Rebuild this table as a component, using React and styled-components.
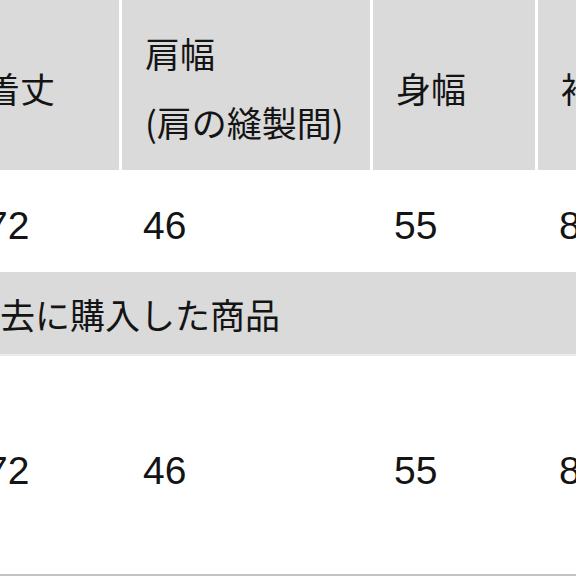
import React from "react";
import styled, { createGlobalStyle } from "styled-components";

const GlobalStyle = createGlobalStyle`
  html, body {
    margin: 0;
    padding: 0;
    background: #ffffff;
    overflow: hidden;
  }
  body {
    font-family: "Liberation Sans", "Noto Sans CJK JP", sans-serif;
    color: #141414;
  }
`;

const COLS = "157px 251px 165px 200px";

export default function App() {
  return (
    <>
      <GlobalStyle />
      <SizeTable>
        <HeaderRow>
          <HeadCell>着丈</HeadCell>
          <HeadCell>
            肩幅
            <br />
            (肩の縫製間)
          </HeadCell>
          <HeadCell>身幅</HeadCell>
          <HeadCell>袖丈</HeadCell>
        </HeaderRow>

        <ValueRow $height={102} $offset={10}>
          <ValueCell>72</ValueCell>
          <ValueCell>46</ValueCell>
          <ValueCell>55</ValueCell>
          <ValueCell>81</ValueCell>
        </ValueRow>

        <SectionBand>過去に購入した商品</SectionBand>

        <ValueRow $height={220} $offset={12} $bordered>
          <ValueCell>72</ValueCell>
          <ValueCell>46</ValueCell>
          <ValueCell>55</ValueCell>
          <ValueCell>81</ValueCell>
        </ValueRow>
      </SizeTable>
    </>
  );
}

// styled components
const SizeTable = styled.main`
  width: 760px;
  margin-left: -38px;
  display: flex;
  flex-direction: column;
`;

const HeaderRow = styled.div`
  display: grid;
  grid-template-columns: 157px 248px 162px 200px;
  column-gap: 3px;
  height: 170px;
  background: #ffffff;
`;

const HeadCell = styled.div`
  display: flex;
  align-items: center;
  padding: 4px 0 0 23px;
  background: #dadada;
  font-family: "Noto Sans CJK JP", sans-serif;
  font-size: 35px;
  line-height: 69px;
  white-space: nowrap;
`;

const ValueRow = styled.div`
  display: grid;
  grid-template-columns: ${COLS};
  height: ${(p) => p.$height}px;
  box-sizing: border-box;
  padding-top: ${(p) => p.$offset || 0}px;
  border-bottom: ${(p) => (p.$bordered ? "2px solid #c4c4c4" : "none")};
  background: #ffffff;
`;

const ValueCell = styled.div`
  display: flex;
  align-items: center;
  padding-left: 24px;
  font-family: "Liberation Sans", sans-serif;
  font-size: 39px;
`;

const SectionBand = styled.div`
  display: flex;
  align-items: center;
  height: 82px;
  padding-left: 3px;
  background: #dadada;
  border-bottom: 2px solid #ebebeb;
  font-family: "Noto Sans CJK JP", sans-serif;
  font-size: 35px;
  white-space: nowrap;
`;
